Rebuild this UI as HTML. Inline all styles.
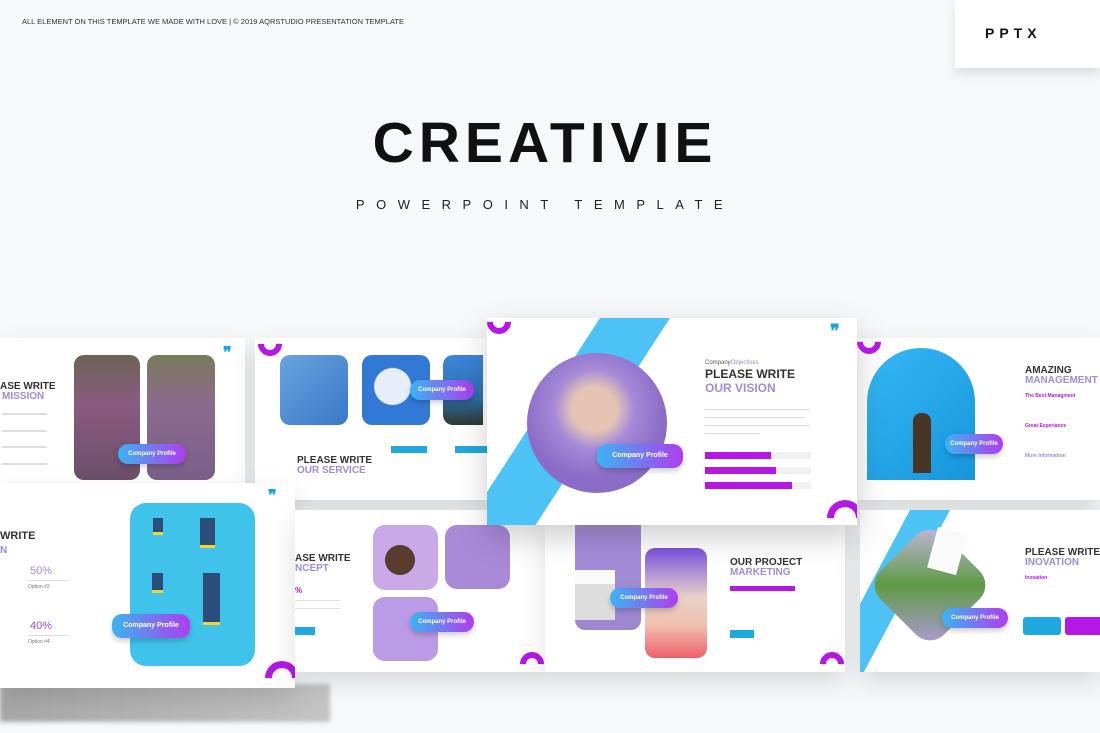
<!DOCTYPE html>
<html><head><meta charset="utf-8"><style>
*{margin:0;padding:0;box-sizing:border-box}
body{width:1100px;height:733px;background:#f6f8fa;position:relative;overflow:hidden;font-family:"Liberation Sans",sans-serif}
.a{position:absolute}
.s{position:absolute;background:#fff;box-shadow:0 10px 24px rgba(0,0,0,.13);overflow:hidden}
.h{font-weight:bold;color:#333;font-size:10px;line-height:11px}
.v{color:#9a8fd8;font-weight:bold;font-size:10px}
.pill{position:absolute;height:20px;border-radius:10px;background:linear-gradient(90deg,#3ab4f2,#b03cf0);color:#fff;font-size:6px;font-weight:bold;text-align:center;line-height:20px;box-shadow:0 3px 6px rgba(0,0,0,.2)}
.ln{position:absolute;height:2px;background:#ddd}
.arc{position:absolute;width:24px;height:24px;border:6px solid #b517e6;border-radius:50%;border-right-color:transparent!important;border-bottom-color:transparent!important}
</style></head><body>
<div class="a" style="left:22px;top:17px;font-size:7.5px;color:#333">ALL ELEMENT ON THIS TEMPLATE WE MADE WITH LOVE | © 2019 AQRSTUDIO PRESENTATION TEMPLATE</div>
<div class="a" style="left:955px;top:0;width:145px;height:68px;background:#fff;box-shadow:0 6px 10px rgba(0,0,0,.1)"></div>
<div class="a" style="left:985px;top:25px;font-size:14px;font-weight:bold;letter-spacing:5px;color:#111">PPTX</div>
<div class="a" style="left:0;width:1090px;top:110px;text-align:center;font-size:57px;font-weight:900;letter-spacing:5px;color:#111">CREATIVIE</div>
<div class="a" style="left:0;width:1090px;top:197px;text-align:center;font-size:13px;letter-spacing:11.5px;color:#222">POWERPOINT TEMPLATE</div>

<div class="a" style="left:0;top:684px;width:330px;height:38px;background:linear-gradient(90deg,#a8a8a8,#c4c4c4);filter:blur(2px)"></div>

<div class="s" style="left:0;top:338px;width:245px;height:148px">
<div class="a h" style="left:0;top:43px">ASE WRITE</div><div class="a v" style="left:2px;top:53px">MISSION</div>
<div class="ln" style="left:2px;top:75px;width:45px"></div><div class="ln" style="left:2px;top:92px;width:45px"></div><div class="ln" style="left:2px;top:108px;width:45px"></div><div class="ln" style="left:2px;top:125px;width:45px"></div>
<div class="a" style="left:74px;top:17px;width:66px;height:125px;border-radius:10px;background:linear-gradient(180deg,#6b6456,#8a5a80 40%,#6a4f6a)"></div>
<div class="a" style="left:147px;top:17px;width:68px;height:125px;border-radius:10px;background:linear-gradient(180deg,#7a7a5c,#8c6a8e 40%,#7a5f8a)"></div>
<div class="pill" style="left:118px;top:106px;width:68px">Company Profile</div>
<div class="a" style="left:223px;top:5px;color:#18a6df;font-size:16px;font-weight:bold">❞</div>
</div>
<div class="s" style="left:255px;top:338px;width:240px;height:162px">
<div class="a" style="left:25px;top:17px;width:68px;height:70px;border-radius:10px;background:linear-gradient(135deg,#6aa3df,#3a78c8)"></div>
<div class="a" style="left:107px;top:17px;width:68px;height:70px;border-radius:10px;background:radial-gradient(circle at 45% 45%,#e6eefc 0 18px,#3279d6 19px)"></div>
<div class="a" style="left:188px;top:17px;width:40px;height:70px;border-radius:10px 0 0 10px;background:linear-gradient(180deg,#3d86db,#2e6fb0 60%,#2c3a2c)"></div>
<div class="pill" style="left:155px;top:42px;width:64px">Company Profile</div>
<div class="a h" style="left:42px;top:117px">PLEASE WRITE</div><div class="a v" style="left:42px;top:127px">OUR SERVICE</div>
<div class="a" style="left:136px;top:108px;width:36px;height:7px;background:#20a8e0"></div>
<div class="a" style="left:200px;top:108px;width:36px;height:7px;background:#20a8e0"></div>
</div>
<div class="arc" style="left:258px;top:332px;transform:rotate(-135deg)"></div>
<div class="s" style="left:857px;top:338px;width:243px;height:162px">
<div class="a" style="left:10px;top:10px;width:108px;height:132px;border-radius:54px 54px 0 0;background:linear-gradient(135deg,#35b8f5,#1595dc)"></div>
<div class="a" style="left:56px;top:75px;width:18px;height:60px;background:#4a3426;border-radius:8px 8px 0 0"></div>
<div class="pill" style="left:88px;top:96px;width:58px">Company Profile</div>
<div class="a h" style="left:168px;top:27px">AMAZING</div><div class="a v" style="left:168px;top:37px">MANAGEMENT</div>
<div class="a" style="left:168px;top:55px;font-size:5px;color:#b517e6;font-weight:bold">The Best Managment</div>
<div class="a" style="left:168px;top:85px;font-size:5px;color:#b517e6;font-weight:bold">Great Experiance</div>
<div class="a" style="left:168px;top:115px;font-size:5px;color:#9a8fd8;font-weight:bold">More Information</div>
</div>
<div class="s" style="left:0;top:483px;width:295px;height:205px">
<div class="a h" style="left:0;top:48px;font-size:11px">WRITE</div><div class="a v" style="left:0;top:62px">N</div>
<div class="a" style="left:30px;top:82px;color:#9a8fd8;font-size:11px">50%</div>
<div class="ln" style="left:28px;top:97px;width:40px;height:1px"></div>
<div class="a" style="left:28px;top:101px;font-size:5px;color:#777">Option #2</div>
<div class="a" style="left:30px;top:137px;color:#9a50d8;font-size:11px">40%</div>
<div class="ln" style="left:28px;top:152px;width:40px;height:1px"></div>
<div class="a" style="left:28px;top:156px;font-size:5px;color:#777">Option #4</div>
<div class="a" style="left:130px;top:20px;width:125px;height:163px;border-radius:16px;background:#3fc3ea"></div>
<div class="a" style="left:153px;top:35px;width:10px;height:17px;background:#2b4d7a;border-bottom:3px solid #f4d72a"></div>
<div class="a" style="left:200px;top:35px;width:15px;height:30px;background:#2b4d7a;border-bottom:3px solid #f4d72a"></div>
<div class="a" style="left:152px;top:90px;width:11px;height:20px;background:#2b4d7a;border-bottom:3px solid #f4d72a"></div>
<div class="a" style="left:203px;top:90px;width:17px;height:52px;background:#2b4d7a;border-bottom:3px solid #f4d72a"></div>
<div class="pill" style="left:112px;top:131px;width:78px;height:24px;line-height:24px;font-size:7px">Company Profile</div>
<div class="a" style="left:268px;top:3px;color:#18a6df;font-size:16px;font-weight:bold">❞</div>
<div class="arc" style="left:265px;top:178px;width:34px;height:34px;border-width:7px;transform:rotate(45deg)"></div>
</div>
<div class="s" style="left:295px;top:510px;width:250px;height:162px">
<div class="a h" style="left:0;top:43px">ASE WRITE</div><div class="a v" style="left:0;top:53px">NCEPT</div>
<div class="a" style="left:0;top:76px;font-size:8px;color:#b517e6;font-weight:bold">%</div>
<div class="ln" style="left:0;top:90px;width:45px;height:1px"></div><div class="ln" style="left:0;top:98px;width:45px;height:1px"></div>
<div class="a" style="left:0;top:117px;width:20px;height:8px;background:#20a8e0"></div>
<div class="a" style="left:78px;top:15px;width:65px;height:65px;border-radius:12px;background:#c9a8e8"></div>
<div class="a" style="left:90px;top:35px;width:30px;height:30px;border-radius:50%;background:#5a3a2c"></div>
<div class="a" style="left:150px;top:15px;width:65px;height:64px;border-radius:12px;background:#a98ad9"></div>
<div class="a" style="left:78px;top:87px;width:65px;height:64px;border-radius:12px;background:#bb9ae6"></div>
<div class="pill" style="left:115px;top:102px;width:64px">Company Profile</div>
</div>
<div class="arc" style="left:520px;top:652px;transform:rotate(45deg)"></div>
<div class="s" style="left:545px;top:520px;width:300px;height:152px">
<div class="a" style="left:30px;top:0;width:66px;height:110px;border-radius:0 0 10px 10px;background:linear-gradient(180deg,#a88fdb,#9c86d0)"></div>
<div class="a" style="left:30px;top:50px;width:40px;height:50px;background:#ddd;border-top:14px solid #fafafa"></div>
<div class="a" style="left:100px;top:28px;width:62px;height:110px;border-radius:10px;background:linear-gradient(180deg,#7b50e0,#e8d2c8 45%,#f0c0b0 70%,#f05f6a)"></div>
<div class="pill" style="left:65px;top:68px;width:68px">Company Profile</div>
<div class="a h" style="left:185px;top:37px">OUR PROJECT</div><div class="a v" style="left:185px;top:47px">MARKETING</div>
<div class="a" style="left:185px;top:66px;width:65px;height:5px;background:#b517e6"></div>
<div class="a" style="left:185px;top:110px;width:24px;height:8px;background:#20a8e0"></div>
</div>
<div class="arc" style="left:820px;top:652px;transform:rotate(45deg)"></div>
<div class="s" style="left:860px;top:510px;width:240px;height:162px">
<div class="a" style="left:50px;top:0;width:40px;height:200px;background:#4cc3f4;transform:skewX(-28deg);transform-origin:top"></div>
<div class="a" style="left:25px;top:30px;width:90px;height:90px;border-radius:20px;background:linear-gradient(135deg,#cbb7ea,#5e9b44 50%,#b59adf);transform:rotate(45deg)"></div>
<div class="a" style="left:72px;top:20px;width:30px;height:42px;background:#fafafa;transform:rotate(15deg)"></div>
<div class="pill" style="left:82px;top:98px;width:66px">Company Profile</div>
<div class="a h" style="left:165px;top:37px">PLEASE WRITE</div><div class="a v" style="left:165px;top:47px">INOVATION</div>
<div class="a" style="left:165px;top:65px;font-size:5px;color:#b517e6;font-weight:bold">Inovation</div>
<div class="a" style="left:163px;top:107px;width:38px;height:18px;border-radius:3px;background:#20a8e0"></div>
<div class="a" style="left:205px;top:107px;width:40px;height:18px;border-radius:3px;background:#b517e6"></div>
</div>
<div class="s" style="left:487px;top:318px;width:370px;height:207px;box-shadow:0 12px 30px rgba(0,0,0,.2)">
<div class="a" style="left:113px;top:0;width:70px;height:260px;background:#4cc3f4;transform:skewX(-33deg);transform-origin:top"></div>
<div class="a" style="left:40px;top:35px;width:140px;height:140px;border-radius:50%;background:radial-gradient(circle at 48% 40%,#e5c4b4 0 22px,#a48ad8 40px,#8b6cc8 70px)"></div>
<div class="pill" style="left:110px;top:126px;width:86px;height:24px;line-height:24px;font-size:7px">Company Profile</div>
<div class="a" style="left:218px;top:42px;font-size:6px;color:#555">Company<span style="color:#9a8fd8">Objectives</span></div>
<div class="a h" style="left:218px;top:50px;font-size:12px;line-height:13px">PLEASE WRITE</div>
<div class="a v" style="left:218px;top:63px;font-size:12px">OUR VISION</div>
<div class="ln" style="left:218px;top:91px;width:105px;height:1px"></div>
<div class="ln" style="left:218px;top:99px;width:100px;height:1px"></div>
<div class="ln" style="left:218px;top:107px;width:105px;height:1px"></div>
<div class="ln" style="left:218px;top:115px;width:55px;height:1px"></div>
<div class="a" style="left:218px;top:134px;width:106px;height:7px;background:#f0f0f0"></div><div class="a" style="left:218px;top:134px;width:66px;height:7px;background:#b517e6"></div>
<div class="a" style="left:218px;top:149px;width:106px;height:7px;background:#f0f0f0"></div><div class="a" style="left:218px;top:149px;width:71px;height:7px;background:#b517e6"></div>
<div class="a" style="left:218px;top:164px;width:106px;height:7px;background:#f0f0f0"></div><div class="a" style="left:218px;top:164px;width:87px;height:7px;background:#b517e6"></div>
<div class="a" style="left:343px;top:3px;color:#18a6df;font-size:18px;font-weight:bold">❞</div>
<div class="arc" style="left:340px;top:182px;width:36px;height:36px;border-width:7px;transform:rotate(45deg)"></div>
</div>
<div class="arc" style="left:487px;top:310px;transform:rotate(-135deg)"></div>
<div class="arc" style="left:857px;top:330px;transform:rotate(-135deg)"></div>
</body></html>
